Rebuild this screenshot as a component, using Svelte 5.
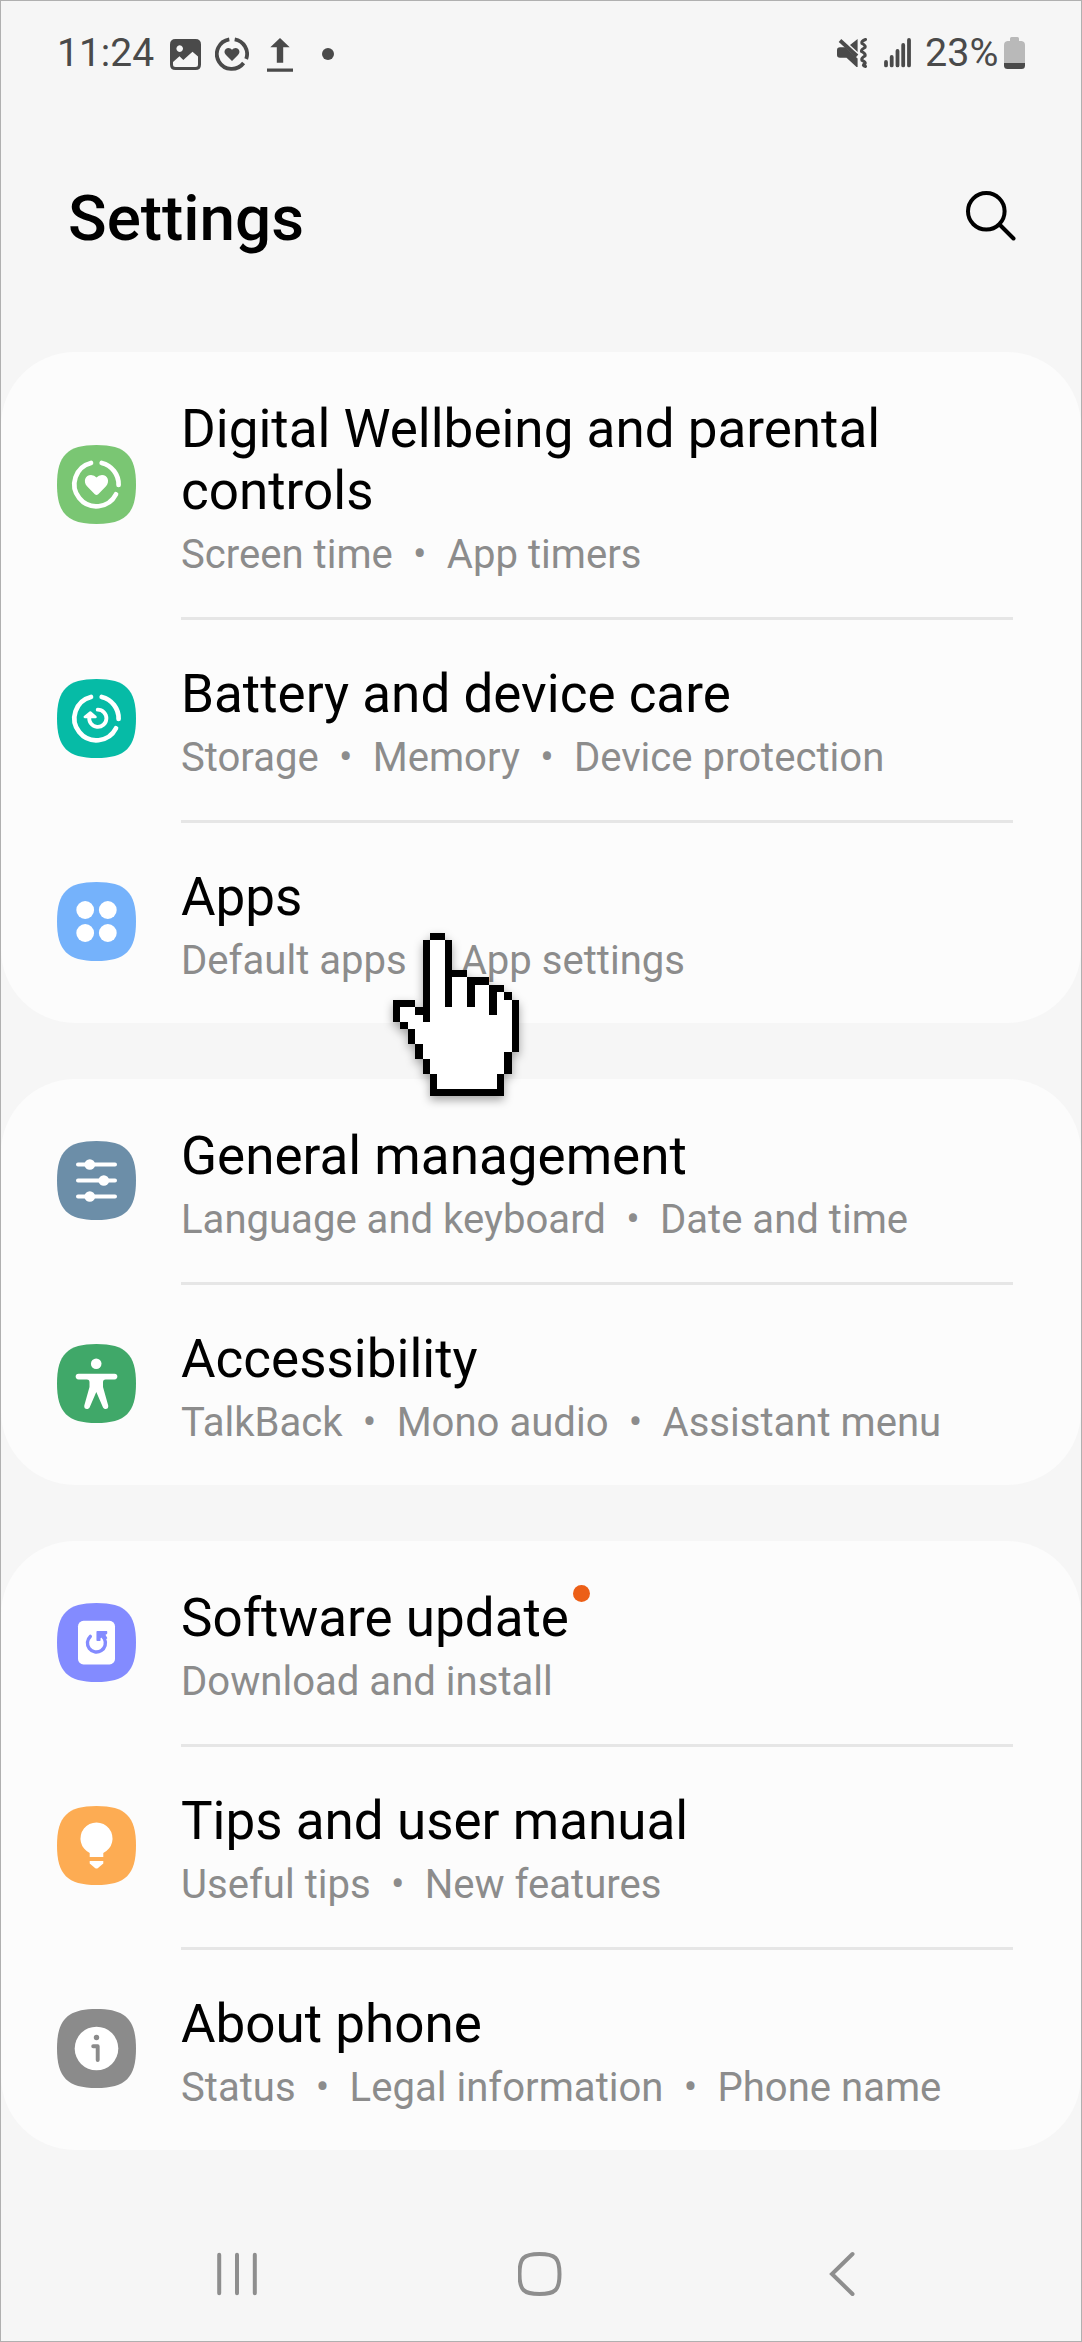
<script>
    const groups = [
        [
            { icon: 'wellbeing', color: '#7ac673', title: 'Digital Wellbeing and parental controls', sub: ['Screen time', 'App timers'] },
            { icon: 'care', color: '#06bba6', title: 'Battery and device care', sub: ['Storage', 'Memory', 'Device protection'] },
            { icon: 'apps', color: '#75b2fb', title: 'Apps', sub: ['Default apps', 'App settings'] }
        ],
        [
            { icon: 'general', color: '#6c8ea8', title: 'General management', sub: ['Language and keyboard', 'Date and time'] },
            { icon: 'accessibility', color: '#40a869', title: 'Accessibility', sub: ['TalkBack', 'Mono audio', 'Assistant menu'] }
        ],
        [
            { icon: 'update', color: '#838bff', title: 'Software update', sub: ['Download and install'], badge: true },
            { icon: 'tips', color: '#fdac53', title: 'Tips and user manual', sub: ['Useful tips', 'New features'] },
            { icon: 'about', color: '#8b8b8b', title: 'About phone', sub: ['Status', 'Legal information', 'Phone name'] }
        ]
    ];
</script>

<div class="phone">
    <header class="status">
        <span class="clock">11:24</span>
        <svg class="s-image" width="31" height="31" viewBox="0 0 31 31">
            <path fill-rule="evenodd" d="M5.5 0h20Q31 0 31 5.5v20q0 5.500-5.500 5.500h-20Q0 31 0 25.500v-20Q0 0 5.500 0ZM9.700 6.300a3.300 3.300 0 1 0 .01 0ZM3 23v2.500q0 2.500 2.500 2.500h20q2.500 0 2.500-2.500V17.500L22.500 12.700 13.300 21 9.500 17.200Z" />
        </svg>
        <svg class="s-ring" width="34" height="34" viewBox="0 0 34 34">
            <path class="line" d="M14.300 2.300A14.900 14.900 0 1 0 28.600 26M19.700 2.300A14.900 14.900 0 0 1 31.200 22" />
            <path d="M17 24 11 18C8 15 10 11 13.300 11Q15.800 11 17 12.800 18.200 11 20.700 11C24 11 26 15 23 18Z" />
        </svg>
        <svg class="s-upload" width="26" height="34" viewBox="0 0 26 34">
            <path d="M13 0 22.700 9.300H16.200V24.700H9.800V9.300H3.300ZM0 30.500H26V33.700H0Z" />
        </svg>
        <span class="more"></span>
        <svg class="s-mute" width="30" height="30" viewBox="0 0 30 30">
            <path d="M20.600 1V14L13 7ZM0 12Q0 9.200 3 9.200H8L20.600 20.500V29H19.500L9.500 19.700H3Q0 19.700 0 17Z" />
            <path class="line" d="M3 2.500 20 18" />
            <path class="line thin" d="M28.500 1.500Q24 3 25 5.500 29 7.500 28 9.500 24 11.500 24.500 13.500 29 15.500 28 18 24 20 25 22.300 29 24 28 25.700 24.500 27.500 28.500 28.500" />
        </svg>
        <svg class="s-signal" width="27" height="30" viewBox="0 0 27 30">
            <path class="line" d="M2 24V27.400M7.700 19V27.400M13.500 13V27.400M19.200 7V27.400M25 2V27.400" />
        </svg>
        <span class="percent">23%</span>
        <svg class="s-battery" width="21" height="32" viewBox="0 0 21 32">
            <path fill="#b9b9b9" d="M6 4V1.500Q6 0 7.500 0h6Q15 0 15 1.500V4h2.500Q21 4.500 21 8V26H0V8Q0 4.500 3.500 4Z" />
            <path d="M0 26H21V28.500Q21 32 17.500 32H3.500Q0 32 0 28.500Z" />
        </svg>
    </header>

    <div class="heading">
        <h1>Settings</h1>
        <svg width="51" height="51" viewBox="0 0 51 51">
            <circle cx="21.300" cy="21.300" r="18.300" />
            <path d="M35 35 48.500 48.500" />
        </svg>
    </div>

    <main>
        {#each groups as rows}
            <section>
                {#each rows as row}
                    <div class="row">
                        <svg class="icon" viewBox="0 0 79 79">
                            <path fill={row.color} d="M0 39.500C0 10.500 10.500 0 39.500 0S79 10.500 79 39.500 68.500 79 39.500 79 0 68.500 0 39.500Z" />
                            {#if row.icon === 'wellbeing' || row.icon === 'care'}
                                <path class="stroke" stroke-width="4.700" d="M34 18A22 22 0 1 0 59 49.300M44.700 18A22 22 0 0 1 61.600 40" />
                            {/if}
                            {#if row.icon === 'wellbeing'}
                                <path class="fill" d="M37.800 49.200 30 41.300C25.800 36.500 28.300 30 34 30Q37.500 30 39.500 32.600 41.500 30 45 30C50.700 30 53.200 36.500 49 41.300L41.200 49.200Q39.500 50.800 37.800 49.200Z" />
                            {:else if row.icon === 'care'}
                                <path class="stroke" stroke-width="3.800" d="M40.700 30.700A8.600 8.600 0 1 1 32.300 38" />
                                <path class="fill" stroke="#fff" stroke-width="2.500" stroke-linejoin="round" d="M33.300 33.500 27.800 38H38.500Z" />
                            {:else if row.icon === 'apps'}
                                <circle class="fill" cx="28.200" cy="28" r="8.900" />
                                <circle class="fill" cx="50.800" cy="28" r="8.900" />
                                <circle class="fill" cx="28.200" cy="51" r="8.900" />
                                <circle class="fill" cx="50.800" cy="51" r="8.900" />
                            {:else if row.icon === 'general'}
                                <path class="stroke" stroke-width="4" d="M21 23.500H58M21 39.500H58M21 55.500H58" />
                                <circle class="fill" cx="32.800" cy="23.500" r="5.300" />
                                <circle class="fill" cx="46.800" cy="39.500" r="5.300" />
                                <circle class="fill" cx="32.800" cy="55.500" r="5.300" />
                            {:else if row.icon === 'accessibility'}
                                <circle class="fill" cx="39.200" cy="19.700" r="5.300" />
                                <path class="stroke" stroke-width="5.600" d="M21.500 32.600H57.500" />
                                <path class="fill" d="M28 34.500Q32.500 35 32.500 38V43L27.300 61.500C26.500 65.500 31.500 66.300 32.800 63L39.300 48 45.800 63C47.200 66.300 52 65.500 51.200 61.500L46 43V38Q46 35 50.500 34.500Z" />
                            {:else if row.icon === 'update'}
                                <rect class="fill" x="21" y="17.800" width="37" height="43.600" rx="5.500" />
                                <path fill="none" stroke={row.color} stroke-width="3.400" stroke-linecap="round" d="M33.300 33.400A9 9 0 1 0 47.500 36" />
                                <path fill={row.color} stroke={row.color} stroke-width="1.500" stroke-linejoin="round" d="M40.200 28.800H49.500V30.300L47.500 31.500 49.500 35 46.500 36 44.500 33.500 42.800 34.800V37.200H40.200Z" />
                            {:else if row.icon === 'tips'}
                                <path class="fill" d="M32.700 51V47A16 16 0 1 1 46.300 47V51ZM32.700 55H46.300V57.500L41 62Q39.500 63 38 62L32.700 57.500Z" />
                            {:else}
                                <circle class="fill" cx="39.500" cy="39.500" r="21.800" />
                                <circle fill={row.color} cx="39.500" cy="28.500" r="2.700" />
                                <path fill="none" stroke={row.color} stroke-width="3.900" stroke-linecap="round" stroke-linejoin="round" d="M36.200 37.300H40.700V51" />
                            {/if}
                        </svg>
                        <div class="text">
                            <div class="title">
                                <span>{row.title}{#if row.badge}<i class="badge"></i>{/if}</span>
                            </div>
                            <div class="sub">
                                {#each row.sub as part, i}
                                    {#if i > 0}<span class="dot">•</span>{/if}
                                    <span>{part}</span>
                                {/each}
                            </div>
                        </div>
                    </div>
                {/each}
            </section>
        {/each}
    </main>

    <nav>
        <svg width="44" height="48" viewBox="0 0 44 48">
            <path d="M4.200 4.700V43.300M22 4.700V43.300M39.800 4.700V43.300" />
        </svg>
        <svg width="44" height="48" viewBox="0 0 44 48">
            <path d="M1.500 24C1.500 8 5.500 4 21.500 4S41.500 8 41.500 24 37.500 44 21.500 44 1.500 40 1.500 24Z" />
        </svg>
        <svg width="44" height="48" viewBox="0 0 44 48">
            <path d="M32.500 4 12 24 32.500 44" />
        </svg>
    </nav>

    <!-- Pixel hand, one unit per pixel -->
    <svg class="cursor" viewBox="0 0 17 22" shape-rendering="crispEdges">
        <path fill="#fff" d="M5 1H7V6H10V7H13V8H15V9H16V16H15V19H14V21H6V19H5V17H4V15H3V13H2V12H1V10H3V11H5Z" />
        <path fill="#000" d="M5 0h2v1h-2zM4 1h1v11h-1zM7 1h1v9h-1zM8 5h2v1h-2zM10 6h3v1h-3zM10 7h1v3h-1zM13 7h2v1h-2zM13 8h1v3h-1zM15 8h1v1h-1zM16 9h1v7h-1zM15 16h1v3h-1zM14 19h1v3h-1zM5 21h9v1h-9zM5 19h1v2h-1zM4 17h1v2h-1zM3 15h1v2h-1zM2 13h1v2h-1zM1 12h1v1h-1zM0 9h3v1h-3zM0 10h1v2h-1zM3 10h1v1h-1z" />
    </svg>
</div>

<style>
    :global(body) {
        margin: 0;
        background: #f6f6f6;
    }

    .phone {
        position: relative;
        box-sizing: border-box;
        width: 1082px;
        height: 2342px;
        border: 1px solid #b0b0b0;
        background: #f6f6f6;
        font-family: Roboto, sans-serif;
        color: #000;
        display: flex;
        flex-direction: column;
        overflow: hidden;
    }

    .status {
        display: flex;
        align-items: center;
        height: 104px;
        padding: 0 56px 0 56px;
        color: #4a4a4a;
        fill: #4a4a4a;
        font-size: 39px;
        line-height: 46px;
    }

    .status svg {
        flex: none;
    }

    .status .line {
        fill: none;
        stroke: #4a4a4a;
        stroke-width: 3.8;
    }

    .status .thin {
        stroke-width: 3;
        stroke-linecap: round;
    }

    .clock {
        width: 98px;
    }

    .s-image {
        margin: 2px 0 0 15px;
    }

    .s-ring {
        margin: 2px 0 0 14px;
    }

    .s-upload {
        margin: 4px 0 0 18px;
    }

    .more {
        width: 12px;
        height: 12px;
        margin: 2px 0 0 29px;
        border-radius: 50%;
        background: #4a4a4a;
    }

    .s-mute {
        margin-left: auto;
    }

    .s-signal {
        margin-left: 17px;
    }

    .s-signal .line {
        stroke-linecap: round;
    }

    .percent {
        margin-left: 14px;
        width: 73px;
        font-size: 39.5px;
    }

    .s-battery {
        margin-left: 6px;
    }

    .heading {
        display: flex;
        align-items: flex-start;
        justify-content: space-between;
        height: 170px;
        padding: 77px 65px 0 67px;
    }

    h1 {
        margin: 0;
        font-size: 63.8px;
        line-height: 74px;
        font-weight: 500;
    }

    .heading svg {
        margin-top: 8px;
        fill: none;
        stroke: #000;
        stroke-width: 4;
        stroke-linecap: round;
    }

    main {
        display: flex;
        flex-direction: column;
        gap: 56px;
    }

    section {
        border-radius: 74px;
        background: #fcfcfc;
    }

    .row {
        display: flex;
        align-items: center;
        padding: 0 68px 0 56px;
    }

    .icon {
        flex: none;
        width: 79px;
        height: 79px;
    }

    .icon .fill {
        fill: #fff;
    }

    .icon .stroke {
        fill: none;
        stroke: #fff;
        stroke-linecap: round;
    }

    .text {
        flex: 1;
        margin-left: 45px;
        padding: 46px 0 39px;
    }

    /* Divider sits inside the upper edge of every row but the first */
    .row + .row .text {
        box-shadow: inset 0 3px #e6e6e6;
    }

    .title {
        font-size: 53px;
        line-height: 62px;
    }

    .title span {
        position: relative;
    }

    .badge {
        position: absolute;
        top: -2px;
        right: -21px;
        width: 17px;
        height: 17px;
        border-radius: 50%;
        background: #ec5f17;
    }

    .sub {
        display: flex;
        margin-top: 9px;
        font-size: 40.1px;
        line-height: 47px;
        color: #8c8c8c;
    }

    .dot {
        width: 54px;
        text-align: center;
    }

    nav {
        display: flex;
        justify-content: space-between;
        margin-top: auto;
        padding: 0 217px 43px 214px;
    }

    nav svg {
        fill: none;
        stroke: #8e8e8e;
        stroke-width: 4;
        stroke-linecap: round;
    }

    .cursor {
        position: absolute;
        left: 392px;
        top: 932px;
        width: 126px;
        height: 163px;
        filter: drop-shadow(0 4px 5px rgba(0, 0, 0, 0.35));
    }
</style>
